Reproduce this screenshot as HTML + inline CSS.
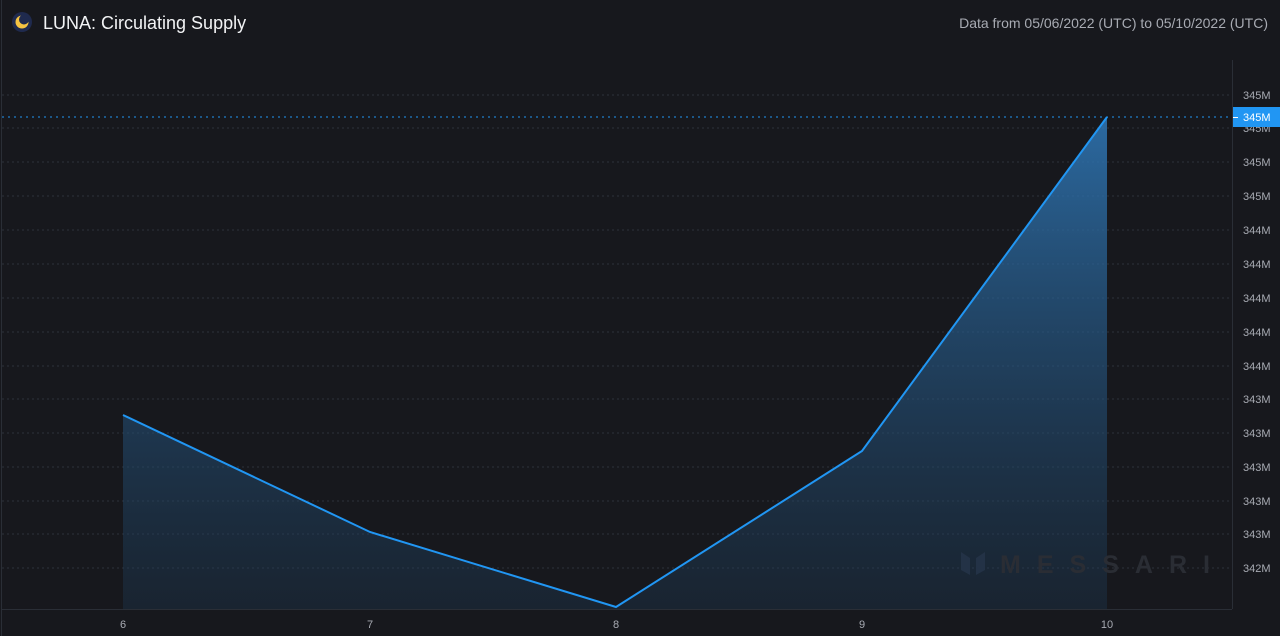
<!DOCTYPE html>
<html><head><style>
body{margin:0;width:1280px;height:636px;background:#17181d;overflow:hidden;font-family:"Liberation Sans",sans-serif}
</style></head><body>
<svg width="1280" height="636" xmlns="http://www.w3.org/2000/svg" style="position:absolute;left:0;top:0">
<defs><linearGradient id="g" x1="0" y1="117" x2="0" y2="609" gradientUnits="userSpaceOnUse">
<stop offset="0" stop-color="#2f78b8" stop-opacity="0.85"/><stop offset="1" stop-color="#1d3a55" stop-opacity="0.35"/></linearGradient></defs>
<line x1="1.5" y1="0" x2="1.5" y2="636" stroke="#2a2e36"/>
<g stroke="#2e323b" stroke-dasharray="2 3">
<line x1="2" x2="1232" y1="95" y2="95"/><line x1="2" x2="1232" y1="128" y2="128"/><line x1="2" x2="1232" y1="162" y2="162"/><line x1="2" x2="1232" y1="196" y2="196"/><line x1="2" x2="1232" y1="230" y2="230"/><line x1="2" x2="1232" y1="264" y2="264"/><line x1="2" x2="1232" y1="298" y2="298"/><line x1="2" x2="1232" y1="332" y2="332"/><line x1="2" x2="1232" y1="366" y2="366"/><line x1="2" x2="1232" y1="399" y2="399"/><line x1="2" x2="1232" y1="433" y2="433"/><line x1="2" x2="1232" y1="467" y2="467"/><line x1="2" x2="1232" y1="501" y2="501"/><line x1="2" x2="1232" y1="534" y2="534"/><line x1="2" x2="1232" y1="568" y2="568"/>
</g>
<polygon points="123,415 370,532 616,607 862,451 1107,117 1107,609 123,609" fill="url(#g)"/>
<polyline points="123,415 370,532 616,607 862,451 1107,117" fill="none" stroke="#2196f3" stroke-width="2"/>
<line x1="2" x2="1232" y1="117" y2="117" stroke="#2196f3" stroke-dasharray="2 4"/>
<line x1="1232.5" y1="60" x2="1232.5" y2="609" stroke="#2a2e36"/>
<line x1="2" y1="609.5" x2="1232" y2="609.5" stroke="#2a2e36"/>
<text x="1000" y="573" font-size="25" font-weight="bold" fill="#2a2d34" textLength="210" lengthAdjust="spacing">MESSARI</text>
<path d="M961 552l9 6v17l-9-5zM985 552l-9 6v17l9-5z" fill="#233246"/>
<g font-size="11" fill="#a8abb3">
<text x="1243" y="99">345M</text><text x="1243" y="132">345M</text><text x="1243" y="166">345M</text><text x="1243" y="200">345M</text><text x="1243" y="234">344M</text><text x="1243" y="268">344M</text><text x="1243" y="302">344M</text><text x="1243" y="336">344M</text><text x="1243" y="370">344M</text><text x="1243" y="403">343M</text><text x="1243" y="437">343M</text><text x="1243" y="471">343M</text><text x="1243" y="505">343M</text><text x="1243" y="538">343M</text><text x="1243" y="572">342M</text>
</g>
<rect x="1233" y="107" width="47" height="20" fill="#2196f3"/>
<line x1="1233" x2="1238" y1="117.5" y2="117.5" stroke="#fff"/>
<text x="1243" y="121" font-size="11" fill="#fff">345M</text>
<g font-size="11" fill="#a8abb3" text-anchor="middle">
<text x="123" y="628">6</text><text x="370" y="628">7</text><text x="616" y="628">8</text><text x="862" y="628">9</text><text x="1107" y="628">10</text>
</g>
<circle cx="22" cy="22" r="10" fill="#1f2a4e"/>
<circle cx="22" cy="22" r="6.5" fill="#f5c342"/>
<circle cx="24" cy="19.5" r="5" fill="#1f2a4e"/>
<text x="43" y="29" font-size="18" fill="#f2f3f5">LUNA: Circulating Supply</text>
<text x="1268" y="28" font-size="14" fill="#a8abb3" text-anchor="end">Data from 05/06/2022 (UTC) to 05/10/2022 (UTC)</text>
</svg>
</body></html>
